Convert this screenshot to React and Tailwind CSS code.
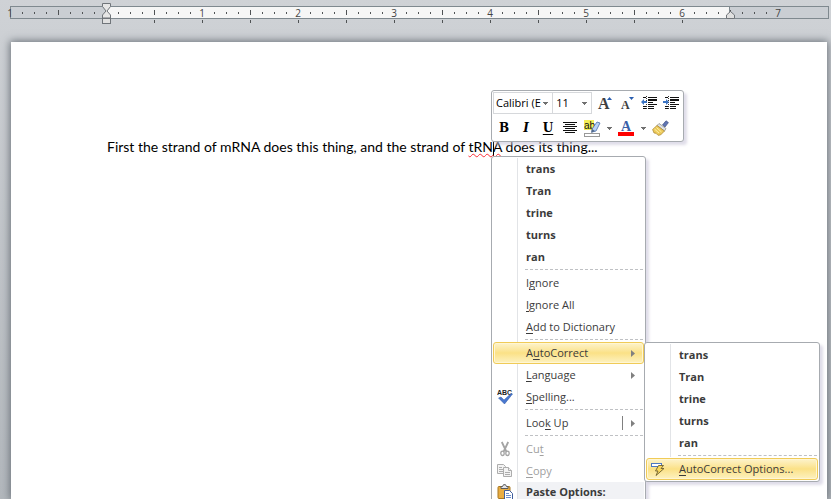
import { useState } from 'react';

const suggestions = ['trans', 'Tran', 'trine', 'turns', 'ran'];

// One tick every eighth of an inch, starting an inch left of the margin
const ticks = Array.from({ length: 65 }, (_, i) => i);

const CaretDown = ({ className = '' }) => (
  <svg className={`pointer-events-none ${className}`} width="5" height="3" viewBox="0 0 5 3" shapeRendering="crispEdges">
    <path d="M0 0h5v1H4v1H3v1H2V2H1V1H0z" fill="#707070" />
  </svg>
);

const CaretRight = () => (
  <svg width="4" height="7" viewBox="0 0 4 7">
    <path d="M0 0L4 3.5L0 7z" fill="#808080" />
  </svg>
);

const GrowFontIcon = () => (
  <svg width="18" height="20" viewBox="0 0 18 20">
    <text x="2" y="16" fontSize="16" fontWeight="bold" fontFamily="Liberation Serif, serif" fill="#404040">A</text>
    <path d="M11 7L13.500 4L16 7z" fill="#2a5eb0" />
  </svg>
);

const ShrinkFontIcon = () => (
  <svg width="18" height="20" viewBox="0 0 18 20">
    <text x="3" y="16" fontSize="12" fontWeight="bold" fontFamily="Liberation Serif, serif" fill="#404040">A</text>
    <path d="M11 4L13.500 7L16 4z" fill="#2a5eb0" />
  </svg>
);

const IndentIcon = ({ increase }) => (
  <svg width="16" height="14" viewBox="0 0 16 14" shapeRendering="crispEdges">
    <path d="M2 1.500h3M7 1.500h9M7 3.500h9M7 6h5M7 8.500h9M2 10.500h3M7 10.500h6M2 12.500h3M7 12.500h6" stroke="#111" />
    <path d="M7 4h9M7 6.500h5" stroke="#111" />
    <path d="M5.500 0v14" stroke="#333" strokeDasharray="1 1" />
    {increase ? (
      <path d="M0 5h3V3l3 3-3 3V7H0z" fill="#3b74c4" shapeRendering="auto" />
    ) : (
      <path d="M6 5H3V3L0 6l3 3V7h3z" fill="#3b74c4" shapeRendering="auto" />
    )}
  </svg>
);

const CenterIcon = () => (
  <svg width="14" height="12" viewBox="0 0 14 12" shapeRendering="crispEdges">
    <path d="M0 .5h14M2 2.500h10M0 4.500h14M2 6.500h10M0 8.500h14M2 10.500h10" stroke="#111" />
  </svg>
);

const HighlightIcon = () => (
  <svg width="17" height="17" viewBox="0 0 17 17">
    <rect x="0" y="0" width="10" height="10" fill="#f4ee58" />
    <text x="0" y="9" fontSize="10" fontFamily="Liberation Sans, sans-serif" fill="#111">ab</text>
    <path d="M8 9l5-7 3 1-4 8-4 1z" fill="#b9d2f4" stroke="#4a6ea9" strokeWidth=".8" />
    <path d="M8 9l3 2-4 2z" fill="#526a8e" />
    <rect x=".5" y="13.500" width="15" height="3" fill="#fff" stroke="#999" />
  </svg>
);

const FontColorIcon = () => (
  <svg width="16" height="20" viewBox="0 0 16 20">
    <text x="3" y="13" fontSize="14" fontWeight="bold" fontFamily="Liberation Serif, serif" fill="#3a5fa8">A</text>
    <rect x="0" y="14" width="16" height="4" fill="#fe0000" />
  </svg>
);

const BrushIcon = () => (
  <svg width="17" height="16" viewBox="0 0 17 16">
    <path d="M10.500 5L14 .8l2.400 1.800-3.400 4.400z" fill="#6176b3" stroke="#3d4e84" strokeWidth=".7" />
    <path d="M7 3.500l7 5-1.500 2.500L5 5.500z" fill="#dfe2ea" stroke="#8a8876" strokeWidth=".7" />
    <path d="M5 5.500l7.500 5.500L8.500 15l-2.500.3-2-2-2-.3L.6 9.500z" fill="#ecc959" stroke="#a8822e" strokeWidth=".7" />
    <path d="M4.500 7.500l5 4.500M2.500 9l4.500 4" stroke="#fff1a8" />
  </svg>
);

const SpellingIcon = () => (
  <svg width="16" height="16" viewBox="0 0 16 16">
    <text x="0" y="6" fontSize="7" fontWeight="bold" fontFamily="Liberation Sans, sans-serif" fill="#222">ABC</text>
    <path d="M1.500 9l2.500-1 3 3 7-6.500 1.500.5L7.500 15z" fill="#4a78cf" stroke="#2f57a4" strokeWidth=".5" />
  </svg>
);

const CutIcon = () => (
  <svg width="16" height="16" viewBox="0 0 16 16" fill="none" stroke="#a4a4a4">
    <path d="M4.800 1l4.500 9.500M11.200 1l-4.500 9.500" strokeWidth="1.800" />
    <ellipse cx="5.500" cy="12.300" rx="1.700" ry="2.200" strokeWidth="1.300" />
    <ellipse cx="10.500" cy="12.300" rx="1.700" ry="2.200" strokeWidth="1.300" />
  </svg>
);

const CopyIcon = () => (
  <svg width="16" height="16" viewBox="0 0 16 16" fill="#f3f3f3" stroke="#adadad">
    <path d="M.5 1.500h6l2 2v7h-8z" />
    <path d="M2 4.500h3M2 6.500h4M2 8.500h4" />
    <path d="M6.500 4.500h5l3 3v6h-8z" />
    <path d="M11.500 4.500v3h3M8 9.500h5M8 11.500h5" />
  </svg>
);

const PasteIcon = () => (
  <svg width="16" height="16" viewBox="0 0 16 16">
    <rect x="1" y="2.500" width="12" height="12" rx="1" fill="#e9ad42" stroke="#a87721" />
    <path d="M4 4.500v-2h1.500L6.500.7h2l1 1.800H11v2z" fill="#e5e6ea" stroke="#5b5b5b" />
    <path d="M7.500 6.500h5l3 3v6h-8z" fill="#fff" stroke="#405f9d" />
    <path d="M9 9.500h3M9 11.500h5M9 13.500h5" stroke="#6b8dcb" />
  </svg>
);

const AutoCorrectIcon = () => (
  <svg width="15" height="16" viewBox="0 0 15 16">
    <rect x=".5" y="2.500" width="10" height="3" fill="#fff" stroke="#4d78c2" />
    <path d="M7.500 4.500h5l-2.500 3h3L5 14.500l2-4.500H4.500z" fill="#fbd85c" stroke="#6d6030" strokeWidth=".9" />
  </svg>
);

const HIGHLIGHT =
  'rounded-[3px] border border-[#f0cb57] bg-linear-to-b from-[#fdf3cb] via-[#fbe186] to-[#fdf2c0] shadow-[inset_0_0_0_1px_#fff6d4]';

// "hot" is the access key that gets underlined
const Label = ({ text, hot }) => {
  if (!hot) return text;
  const at = text.indexOf(hot);
  return (
    <>
      {text.slice(0, at)}
      <span className="underline decoration-1 underline-offset-2">{hot}</span>
      {text.slice(at + 1)}
    </>
  );
};

const MenuItem = ({ text, hot, icon, bold, active, disabled, submenu, split, onClick }) => (
  <button
    type="button"
    role="menuitem"
    disabled={disabled}
    onClick={onClick}
    aria-haspopup={submenu ? 'menu' : undefined}
    className={`relative flex h-[22px] w-full items-center pr-2 text-left ${bold ? 'font-bold' : ''} ${
      disabled ? 'text-[#a0a0a0]' : 'text-[#3b3b3b]'
    } ${active ? HIGHLIGHT : 'border-x border-transparent'}`}
  >
    <span className="flex w-6 shrink-0 justify-center pr-0.5">{icon}</span>
    <span className="flex-1 pl-2 whitespace-nowrap">
      <Label text={text} hot={hot} />
    </span>
    {split && <span className="mr-2 h-3.5 w-px bg-[#808080]" />}
    {submenu && <CaretRight />}
  </button>
);

const Separator = () => (
  <div role="separator" className="h-1 pt-px pr-px pl-8">
    <div className="border-t border-dashed border-[#bfc1c4]" />
  </div>
);

const Menu = ({ label, className, gutter, children }) => (
  <div
    role="menu"
    aria-label={label}
    className={`absolute rounded-[3px] border border-[#a7abb0] bg-white p-px font-['Open_Sans','Noto_Sans',sans-serif] text-[11px] leading-4 shadow-[3px_3px_3px_#c9c6da99] ${className}`}
  >
    <div className={`absolute top-px left-[25px] w-px bg-[#e2e4e7] ${gutter}`} />
    {children}
  </div>
);

const ToolButton = ({ label, className = '', children }) => (
  <button type="button" aria-label={label} className={`flex h-5 w-[22px] items-center justify-center ${className}`}>
    {children}
  </button>
);

const MiniToolbar = () => (
  <div className="absolute top-12 left-[480px] w-[193px] rounded-[3px] border border-[#a7abb0] bg-white p-px font-['Open_Sans','Noto_Sans',sans-serif] text-[11px] text-black shadow-[3px_3px_3px_#c9c6da99]">
    <div className="flex h-[22px] items-center">
      <div className="relative flex h-[22px] w-[62px] items-center border border-[#d6d8db]">
        <select aria-label="Font" className="w-12 appearance-none overflow-hidden pl-0.5 text-clip outline-none">
          <option>Calibri (E</option>
        </select>
        <CaretDown className="absolute right-1" />
      </div>
      <div className="relative -ml-px flex h-[22px] w-[41px] items-center border border-[#d6d8db]">
        <select aria-label="Font size" className="w-full appearance-none pl-[3px] outline-none">
          <option>11</option>
        </select>
        <CaretDown className="absolute right-1" />
      </div>
      <div className="flex pl-0.5">
        <ToolButton label="Grow font"><GrowFontIcon /></ToolButton>
        <ToolButton label="Shrink font"><ShrinkFontIcon /></ToolButton>
        <ToolButton label="Decrease indent"><IndentIcon /></ToolButton>
        <ToolButton label="Increase indent"><IndentIcon increase /></ToolButton>
      </div>
    </div>
    <div className="flex h-[26px] items-center pt-0.5 font-['DejaVu_Serif',serif] text-xs">
      <ToolButton label="Bold" className="font-bold">B</ToolButton>
      <ToolButton label="Italic" className="font-bold italic">I</ToolButton>
      <ToolButton label="Underline" className="font-bold underline underline-offset-2">U</ToolButton>
      <ToolButton label="Center"><CenterIcon /></ToolButton>
      <ToolButton label="Text highlight color"><HighlightIcon /></ToolButton>
      <button type="button" aria-label="Highlight colors" className="flex w-3 justify-center"><CaretDown /></button>
      <ToolButton label="Font color"><FontColorIcon /></ToolButton>
      <button type="button" aria-label="Font colors" className="flex w-3 justify-center"><CaretDown /></button>
      <ToolButton label="Format painter"><BrushIcon /></ToolButton>
    </div>
  </div>
);

const Ruler = () => (
  <div className="relative mr-0.5 ml-2.5 h-9 pt-1.5">
    <div className="flex h-[13px] border border-[#7f898f]">
      <div className="w-[95px] bg-[#caced3]" />
      <div className="w-[624px] border-r border-[#7f898f] bg-[#f6f6f6]" />
      <div className="flex-1 bg-[#caced3]" />
    </div>
    <div className="absolute top-1.5 -left-1.5 flex font-['Open_Sans','Noto_Sans',sans-serif] text-[10px] text-[#444]">
      {ticks.map((i) => {
        const inch = i / 8 - 1;
        const tabStop = i % 4 === 0 && i > 8 && i < 60;
        return (
          <div key={i} className="flex w-3 flex-col items-center">
            <div className="flex h-[13px] items-center">
              {i % 8 === 0 ? (
                <span className="leading-3">{i === 8 ? '' : Math.abs(inch)}</span>
              ) : (
                <span className={`w-px bg-[#505355] ${i % 4 === 0 ? 'h-[5px]' : 'h-0.5'}`} />
              )}
            </div>
            {tabStop && <span className="mt-px h-[3px] w-px bg-[#505355]" />}
          </div>
        );
      })}
    </div>
    {/* Indent markers */}
    <svg className="absolute top-[3px] left-[92px]" width="9" height="22" viewBox="0 0 9 22">
      <path d="M.5.500h8v3l-3.500 4.500 3.500 4v3h-8v-3l3.500-4-3.500-4.500z" fill="#e6e6e6" stroke="#70757a" />
      <rect x=".5" y="15.500" width="8" height="5" fill="#e0e0e0" stroke="#70757a" />
    </svg>
    <svg className="absolute top-[11px] left-[716px]" width="9" height="8" viewBox="0 0 9 8">
      <path d="M.5 7.500v-3.500L4.500.5l4 3.500v3.500z" fill="#e0e0e0" stroke="#70757a" />
    </svg>
  </div>
);

const App = () => {
  const [subOpen, setSubOpen] = useState(true);

  return (
    <div className="flex h-screen flex-col overflow-hidden bg-linear-to-b from-[#cfd2d6] to-[#b2b7bc]">
      <Ruler />

      <main className="relative mt-1.5 mr-1 ml-[11px] flex-1 bg-white pt-[95px] pl-24 shadow-[0_0_8px_1px_#686f77]">
        <p className="font-['Lato','Liberation_Sans',sans-serif] text-sm leading-5 whitespace-nowrap text-black">
          First the strand of mRNA does this thing, and the strand of{' '}
          <span className="underline decoration-red-500 decoration-wavy decoration-1 underline-offset-1">
            tRN<span className="-mr-px inline-block h-4 w-px bg-black align-middle" />A
          </span>{' '}
          does its thing...
        </p>

        <MiniToolbar />

        <Menu label="Spelling" className="top-[114px] left-[480px] w-[155px]" gutter="bottom-0">
          {suggestions.map((word) => (
            <MenuItem key={word} text={word} bold />
          ))}
          <Separator />
          <MenuItem text="Ignore" hot="g" />
          <MenuItem text="Ignore All" hot="I" />
          <MenuItem text="Add to Dictionary" hot="A" />
          <Separator />
          <MenuItem text="AutoCorrect" hot="u" submenu active={subOpen} onClick={() => setSubOpen(!subOpen)} />
          <MenuItem text="Language" hot="L" submenu />
          <MenuItem text="Spelling..." hot="S" icon={<SpellingIcon />} />
          <Separator />
          <MenuItem text="Look Up" hot="k" submenu split />
          <Separator />
          <MenuItem text="Cut" hot="t" icon={<CutIcon />} disabled />
          <MenuItem text="Copy" hot="C" icon={<CopyIcon />} disabled />
          <div className="flex h-5 items-center pl-px font-bold text-[#3b3b3b]">
            <span className="flex w-6 shrink-0 justify-center pr-0.5"><PasteIcon /></span>
            <span className="flex h-full flex-1 items-center bg-[#f1f2f5] pl-2">Paste Options:</span>
          </div>
        </Menu>

        {subOpen && (
          <Menu label="AutoCorrect" className="top-[300px] left-[633px] w-[176px]" gutter="bottom-6">
            {suggestions.map((word) => (
              <MenuItem key={word} text={word} bold />
            ))}
            <Separator />
            <MenuItem text="AutoCorrect Options..." hot="A" icon={<AutoCorrectIcon />} active />
          </Menu>
        )}
      </main>
    </div>
  );
};

export default App;
